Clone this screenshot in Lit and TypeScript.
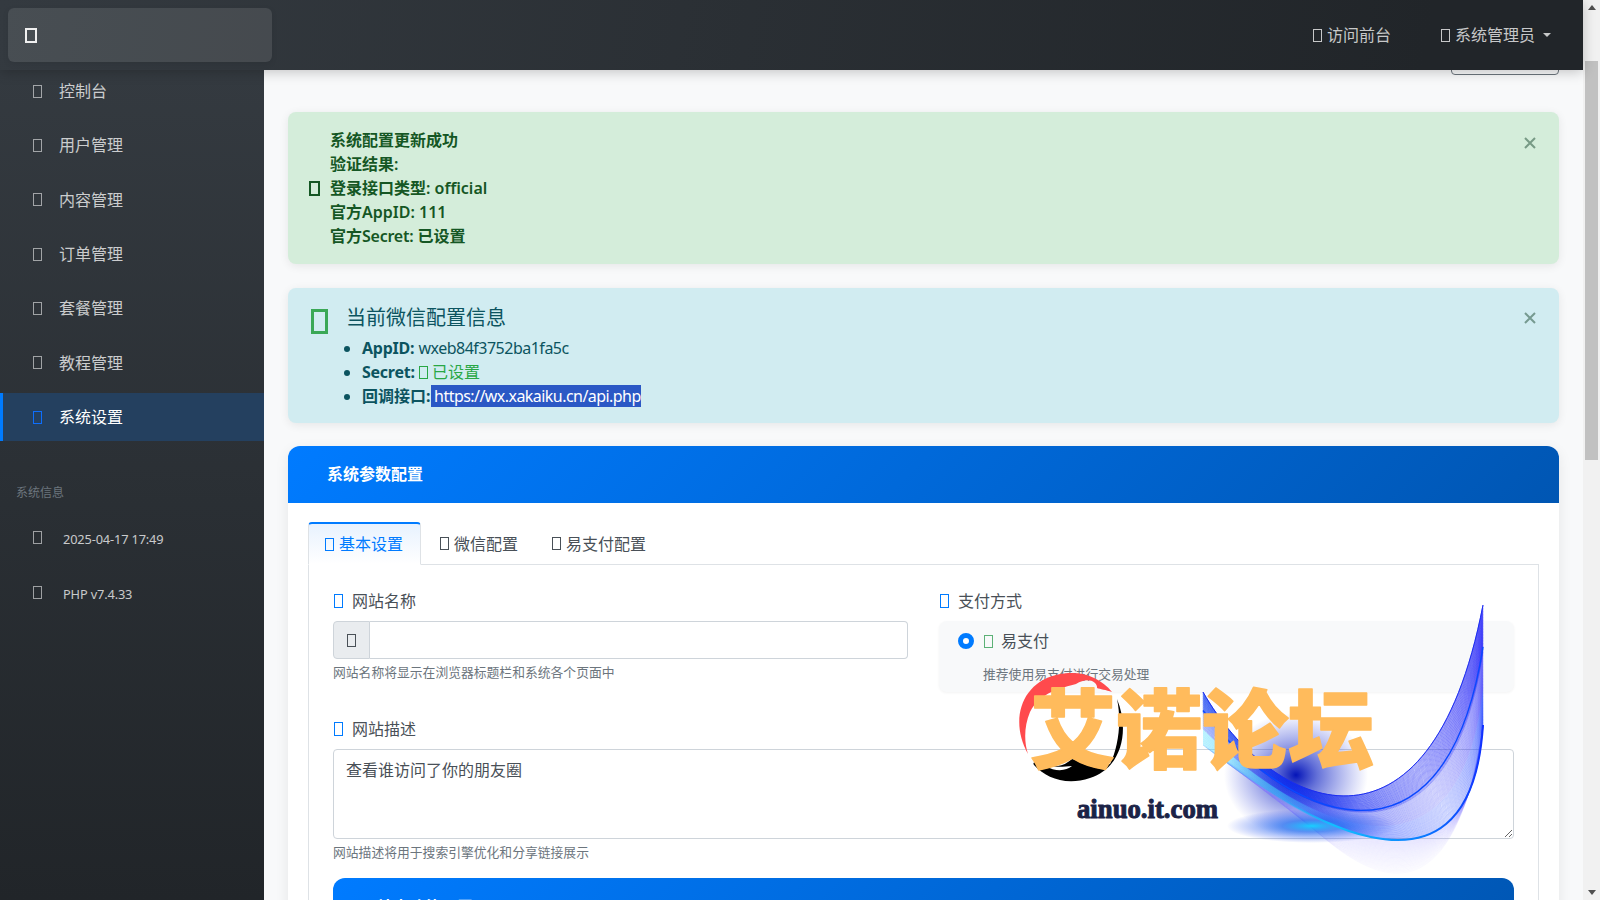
import { LitElement, html, css, svg } from "lit";
import { customElement } from "lit/decorators.js";

type Pt = [number, number];
type Curve = [Pt, Pt, Pt, Pt];

const mix = (a: Curve, b: Curve, t: number): string => {
  const p = a.map((q, i) => [q[0] + (b[i][0] - q[0]) * t, q[1] + (b[i][1] - q[1]) * t]);
  const f = (v: number[]) => `${v[0].toFixed(1)} ${v[1].toFixed(1)}`;
  return `M${f(p[0])}C${f(p[1])} ${f(p[2])} ${f(p[3])}`;
};

const UPPER: Curve = [[1203, 692], [1270, 810], [1430, 880], [1483, 605]];
const LOWER: Curve = [[1203, 745], [1290, 812], [1470, 930], [1483, 725]];
const OUTER: Curve = [[1285, 800], [1350, 870], [1450, 950], [1483, 725]];

const range = (n: number) => Array.from({ length: n }, (_, i) => i / (n - 1));

@customElement("app-root")
export class AppRoot extends LitElement {
  static styles = css`
    :host {
      display: block;
      width: 1600px;
      height: 900px;
      overflow: hidden;
      font-family: "Noto Sans", "Noto Sans CJK SC", sans-serif;
      font-size: 16px;
      line-height: 1.5;
      color: #495057;
    }
    * { box-sizing: border-box; }
    .root { display: flex; width: 100%; height: 100%; position: relative; }
    .viewport { flex: 1; min-width: 0; display: flex; flex-direction: column; }

    .tofu {
      display: inline-block;
      flex: none;
      width: 9px;
      height: 13px;
      border: 1px solid currentColor;
      vertical-align: -1px;
    }

    .navbar {
      flex: none;
      height: 70px;
      position: relative;
      z-index: 2;
      display: flex;
      align-items: flex-start;
      justify-content: space-between;
      padding: 8px 32px 0 8px;
      background: linear-gradient(100deg, #343a40, #212529 90%);
      box-shadow: 0 2px 12px rgba(0, 0, 0, 0.22);
      color: rgba(255, 255, 255, 0.75);
    }
    .brand {
      width: 264px;
      height: 54px;
      border-radius: 6px;
      background: rgba(255, 255, 255, 0.1);
      display: flex;
      align-items: center;
      padding-left: 17px;
      box-shadow: 0 2px 6px rgba(0, 0, 0, 0.08);
    }
    .brand .tofu { width: 12px; height: 15px; border: 2px solid #f0f0f0; }
    .nav-links { display: flex; gap: 50px; height: 54px; align-items: center; }
    .nav-link { display: flex; align-items: center; gap: 5px; white-space: nowrap; }
    .caret {
      width: 0;
      height: 0;
      margin-left: 3px;
      border-left: 4px solid transparent;
      border-right: 4px solid transparent;
      border-top: 4px solid currentColor;
    }

    .below { flex: 1; min-height: 0; display: flex; }
    aside {
      flex: none;
      width: 264px;
      background: linear-gradient(180deg, #343a40, #212529);
      color: rgba(255, 255, 255, 0.75);
      overflow: hidden;
    }
    .menu { margin-top: -3px; display: flex; flex-direction: column; gap: 6px; }
    .menu-item {
      height: 48.33px;
      display: flex;
      align-items: center;
      gap: 17px;
      padding-left: 33px;
    }
    .menu-item .tofu { color: rgba(255, 255, 255, 0.55); }
    .menu-item.active {
      background: #24405f;
      color: #fff;
      box-shadow: inset 3px 0 0 #007bff;
    }
    .menu-item.active .tofu { color: #0d6efd; }
    .side-title {
      margin: 43px 0 13px 16px;
      font-size: 12px;
      line-height: 18px;
      color: #6c757d;
    }
    .sys-list { display: flex; flex-direction: column; gap: 7px; }
    .sys-item {
      height: 48px;
      display: flex;
      align-items: center;
      gap: 21px;
      padding-left: 33px;
      font-size: 12.8px;
      letter-spacing: -0.15px;
    }
    .sys-item .tofu { color: rgba(255, 255, 255, 0.55); margin-top: -3px; }

    main {
      flex: 1;
      min-width: 0;
      overflow: hidden;
      background: #f8f9fa;
      padding: 0 24px;
      display: flex;
      flex-direction: column;
    }
    .ghost-btn {
      flex: none;
      align-self: flex-end;
      width: 108px;
      height: 15px;
      margin-top: -10px;
      margin-bottom: 37px;
      border: 1px solid #6c757d;
      border-radius: 4px;
    }
    .alert {
      flex: none;
      position: relative;
      border-radius: 8px;
      padding: 16px 20px;
      margin-bottom: 24px;
      box-shadow: 0 2px 10px rgba(0, 0, 0, 0.08);
    }
    .alert.ok {
      background: #d4edda;
      color: #155724;
      font-weight: 600;
      display: flex;
      align-items: center;
      gap: 10px;
      height: 152px;
    }
    .alert.ok .tofu { width: 11px; height: 15px; border-width: 2px; margin-left: 1px; }
    .tight { letter-spacing: -0.25px; }
    .alert.info {
      background: #d1ecf1;
      color: #0c5460;
      height: 135px;
      margin-bottom: 23px;
      display: flex;
      gap: 18px;
    }
    .alert.info > .tofu {
      width: 17px;
      height: 25px;
      border: 3px solid #3aa856;
      margin: 5px 0 0 3px;
    }
    .alert h5 { margin: 2px 0 6px; font-size: 20px; font-weight: 400; line-height: 24px; }
    .alert ul { margin: 0; padding-left: 16px; }
    .alert b { font-weight: 700; }
    .alert b.lt { letter-spacing: -0.25px; }
    .latin { letter-spacing: -0.5px; }
    .green { color: #28a745; }
    .green .tofu { margin-right: 4px; }
    .sel { background: #2b58c5; color: #fff; letter-spacing: -0.55px; }
    .close {
      position: absolute;
      top: 23px;
      right: 21px;
      width: 16px;
      height: 16px;
      opacity: 0.5;
    }
    .alert.info .close { top: 22px; }

    .card {
      flex: none;
      border-radius: 12px 12px 0 0;
      background: #fff;
      box-shadow: 0 4px 14px rgba(0, 0, 0, 0.08);
      height: 500px;
    }
    .card-head {
      height: 57px;
      padding: 0 0 2px 39px;
      display: flex;
      align-items: center;
      border-radius: 12px 12px 0 0;
      background: linear-gradient(135deg, #007bff, #0056b3);
      color: #fff;
      font-weight: 700;
    }
    .card-body { padding: 19px 20px 0; }
    .tabs {
      display: flex;
      height: 43px;
      gap: 2px;
      border-bottom: 1px solid #dee2e6;
    }
    .tab {
      width: 110px;
      height: 43px;
      display: flex;
      align-items: center;
      gap: 5px;
      padding-left: 17px;
      white-space: nowrap;
    }
    .tab.active {
      width: 113px;
      color: #007bff;
      background: linear-gradient(180deg, #e8f2fe, #fff);
      border: 1px solid #dee2e6;
      border-top: 2px solid #007bff;
      border-bottom: 1px solid #fff;
      border-radius: 4px 4px 0 0;
      padding-left: 16px;
    }
    .tab-pane {
      border: 1px solid #dee2e6;
      border-top: 0;
      padding: 24px 24px 0;
    }
    .row {
      display: grid;
      grid-template-columns: 1fr 1fr;
      gap: 31px;
      margin-bottom: 25px;
    }
    .label { display: flex; align-items: center; gap: 9px; margin-bottom: 8px; height: 24px; padding-left: 1px; }
    .label .tofu { color: #007bff; height: 14px; }
    .input-group { display: flex; height: 38px; }
    .prepend {
      width: 37px;
      display: flex;
      align-items: center;
      justify-content: center;
      background: #e9ecef;
      border: 1px solid #ced4da;
      border-radius: 4px 0 0 4px;
    }
    input[type="text"] {
      flex: 1;
      min-width: 0;
      border: 1px solid #ced4da;
      border-left: 0;
      border-radius: 0 4px 4px 0;
      background: #fff;
    }
    .help { margin-top: 4px; font-size: 12.8px; line-height: 19px; color: #6c757d; }
    .pay {
      height: 71px;
      background: #f8f9fa;
      border-radius: 8px;
      box-shadow: 0 1px 3px rgba(0, 0, 0, 0.05);
      padding: 8px 19px;
    }
    .pay-line { display: flex; align-items: center; height: 24px; }
    .radio {
      width: 16px;
      height: 16px;
      border-radius: 50%;
      border: 5px solid #007bff;
      background: #fff;
      margin-right: 10px;
    }
    .pay-line .tofu { color: #5cb176; margin-right: 8px; }
    .pay-note {
      margin: 12px 0 0 25px;
      font-size: 12.8px;
      line-height: 19px;
      color: #6c757d;
    }
    textarea {
      display: block;
      width: 100%;
      height: 90px;
      border: 1px solid #ced4da;
      border-radius: 4px;
      padding: 8px 12px;
      font: inherit;
      color: #495057;
      resize: vertical;
      background: #fff;
    }
    .sub-card {
      margin-top: 16px;
      height: 60px;
      border-radius: 12px 12px 0 0;
      background: linear-gradient(135deg, #007bff, #0056b3);
      color: #fff;
      font-weight: 700;
      padding: 17px 0 0 44px;
    }

    .scrollbar {
      flex: none;
      width: 17px;
      height: 900px;
      background: #f1f1f1;
      display: flex;
      flex-direction: column;
      align-items: center;
      padding: 5px 2px;
    }
    .arrow-up, .arrow-down {
      width: 0;
      height: 0;
      border-left: 4px solid transparent;
      border-right: 4px solid transparent;
    }
    .arrow-up { border-bottom: 5px solid #505050; }
    .arrow-down { border-top: 5px solid #505050; margin-top: auto; }
    .thumb { width: 13px; height: 399px; margin-top: 51px; background: #c1c1c1; }

    .mark {
      position: absolute;
      left: 0;
      top: 0;
      width: 1600px;
      height: 900px;
      pointer-events: none;
    }
    .mark-cn {
      font-family: "Noto Sans CJK SC", sans-serif;
      font-weight: 900;
      font-size: 86px;
      fill: #ffbb5c;
      stroke: #ffbb5c;
      stroke-width: 1.5px;
      stroke-linejoin: round;
    }
    .mark-en {
      font-family: "Liberation Serif", serif;
      font-weight: 700;
      font-size: 28px;
      fill: #1b2347;
      stroke: #1b2347;
      stroke-width: 1px;
    }
  `;

  private tofu() {
    return html`<span class="tofu"></span>`;
  }

  private closeIcon() {
    return html`<svg class="close" viewBox="0 0 16 16">
      <path d="M3 3 13 13M13 3 3 13" stroke="#1d4a32" stroke-width="2" fill="none"></path>
    </svg>`;
  }

  private watermark() {
    return html`<svg class="mark" viewBox="0 0 1600 900">
      <defs>
        <radialGradient id="spot">
          <stop offset="0" stop-color="#0414b8"></stop>
          <stop offset="0.3" stop-color="#2436c8" stop-opacity="0.7"></stop>
          <stop offset="1" stop-color="#4a5ae0" stop-opacity="0"></stop>
        </radialGradient>
        <radialGradient id="glow">
          <stop offset="0" stop-color="#18d0ff"></stop>
          <stop offset="0.35" stop-color="#1a68f0" stop-opacity="0.7"></stop>
          <stop offset="1" stop-color="#3050f0" stop-opacity="0"></stop>
        </radialGradient>
        <linearGradient id="blade" gradientUnits="userSpaceOnUse" x1="1203" y1="0" x2="1483" y2="0">
          <stop offset="0" stop-color="#0a38f0"></stop>
          <stop offset="0.6" stop-color="#0a1cf0"></stop>
          <stop offset="1" stop-color="#1a18f8"></stop>
        </linearGradient>
        <linearGradient id="cyan" gradientUnits="userSpaceOnUse" x1="1203" y1="0" x2="1330" y2="0">
          <stop offset="0" stop-color="#30d8ff"></stop>
          <stop offset="0.6" stop-color="#18a8ff"></stop>
          <stop offset="1" stop-color="#0a30ff"></stop>
        </linearGradient>
        <linearGradient id="edge" gradientUnits="userSpaceOnUse" x1="1270" y1="0" x2="1483" y2="0">
          <stop offset="0" stop-color="#12c0ff" stop-opacity="0"></stop>
          <stop offset="0.3" stop-color="#12c0ff"></stop>
          <stop offset="0.7" stop-color="#0a80ff"></stop>
          <stop offset="1" stop-color="#1030ff"></stop>
        </linearGradient>
      </defs>

      <ellipse cx="1296" cy="775" rx="72" ry="62" fill="url(#spot)"></ellipse>

      ${range(30).map(
        (t) => svg`<path d=${mix(LOWER, OUTER, t)} fill="none" stroke="#8078ff" stroke-width="0.4" opacity=${0.4 * (1 - t) + 0.1}></path>`
      )}
      ${range(80).map(
        (t) => svg`<path d=${mix(UPPER, LOWER, t)} fill="none"
          stroke=${t > 0.7 ? "url(#cyan)" : "url(#blade)"}
          stroke-width=${t < 0.4 ? 0.5 : 0.35} opacity=${t < 0.4 ? 0.85 : 0.7}></path>`
      )}
      <ellipse cx="1312" cy="826" rx="85" ry="17" fill="url(#glow)"></ellipse>
      <path d=${mix(UPPER, LOWER, 0)} fill="none" stroke="#1a2cf0" stroke-width="1"></path>
      <path d=${mix(UPPER, LOWER, 0.35)} fill="none" stroke="#0a48ff" stroke-width="1.4"></path>
      <path d=${mix(UPPER, LOWER, 1)} fill="none" stroke="url(#edge)" stroke-width="2"></path>

      <path d="M1028 754C1010 722 1020 684 1056 675C1080 669 1100 677 1112 692C1106 690 1100 689 1097 688C1098 682 1088 676 1076 684C1062 688 1040 692 1030 712C1024 726 1024 742 1028 754Z" fill="#ff4a4d"></path>
      <path d="M1117 699C1130 730 1122 768 1090 778C1066 786 1046 778 1034 765C1032 762 1036 761 1038 763C1052 768 1062 768 1072 759C1086 762 1104 766 1110 764C1118 748 1122 722 1117 699Z" fill="#000"></path>
      <path d="M1045 766C1056 772 1066 771 1072 766C1064 767 1054 767 1045 766Z" fill="#fff"></path>

      <text class="mark-cn" x="1030" y="762">艾诺论坛</text>
      <text class="mark-en" x="1077" y="818" textLength="141" lengthAdjust="spacingAndGlyphs">ainuo.it.com</text>
    </svg>`;
  }

  render() {
    const menu = ["控制台", "用户管理", "内容管理", "订单管理", "套餐管理", "教程管理", "系统设置"];
    return html`
      <div class="root">
        <div class="viewport">
          <header class="navbar">
            <div class="brand">${this.tofu()}</div>
            <nav class="nav-links">
              <span class="nav-link">${this.tofu()}访问前台</span>
              <span class="nav-link">${this.tofu()}系统管理员<span class="caret"></span></span>
            </nav>
          </header>
          <div class="below">
            <aside>
              <div class="menu">
                ${menu.map(
                  (m, i) => html`<div class="menu-item ${i === 6 ? "active" : ""}">${this.tofu()}<span>${m}</span></div>`
                )}
              </div>
              <div class="side-title">系统信息</div>
              <div class="sys-list">
                <div class="sys-item">${this.tofu()}<span>2025-04-17 17:49</span></div>
                <div class="sys-item">${this.tofu()}<span>PHP v7.4.33</span></div>
              </div>
            </aside>
            <main>
              <div class="ghost-btn"></div>
              <section class="alert ok">
                ${this.tofu()}
                <div>
                  系统配置更新成功<br />验证结果:<br />登录接口类型: official<br />官方AppID: 111<br />官方<span class="tight">Secret:</span> 已设置
                </div>
                ${this.closeIcon()}
              </section>
              <section class="alert info">
                ${this.tofu()}
                <div>
                  <h5>当前微信配置信息</h5>
                  <ul>
                    <li><b class="lt">AppID:</b> <span class="latin">wxeb84f3752ba1fa5c</span></li>
                    <li><b class="lt">Secret:</b> <span class="green">${this.tofu()}已设置</span></li>
                    <li><b>回调接口:</b><span class="sel"> https://wx.xakaiku.cn/api.php</span></li>
                  </ul>
                </div>
                ${this.closeIcon()}
              </section>
              <section class="card">
                <div class="card-head">系统参数配置</div>
                <div class="card-body">
                  <div class="tabs">
                    <div class="tab active">${this.tofu()}基本设置</div>
                    <div class="tab">${this.tofu()}微信配置</div>
                    <div class="tab">${this.tofu()}易支付配置</div>
                  </div>
                  <div class="tab-pane">
                    <div class="row">
                      <div>
                        <div class="label">${this.tofu()}网站名称</div>
                        <div class="input-group">
                          <span class="prepend">${this.tofu()}</span>
                          <input type="text" />
                        </div>
                        <div class="help">网站名称将显示在浏览器标题栏和系统各个页面中</div>
                      </div>
                      <div>
                        <div class="label">${this.tofu()}支付方式</div>
                        <div class="pay">
                          <div class="pay-line"><span class="radio"></span>${this.tofu()}易支付</div>
                          <div class="pay-note">推荐使用易支付进行交易处理</div>
                        </div>
                      </div>
                    </div>
                    <div class="label">${this.tofu()}网站描述</div>
                    <textarea>查看谁访问了你的朋友圈</textarea>
                    <div class="help">网站描述将用于搜索引擎优化和分享链接展示</div>
                    <div class="sub-card">站点功能配置</div>
                  </div>
                </div>
              </section>
            </main>
          </div>
        </div>
        <div class="scrollbar">
          <span class="arrow-up"></span>
          <div class="thumb"></div>
          <span class="arrow-down"></span>
        </div>
        ${this.watermark()}
      </div>
    `;
  }
}
